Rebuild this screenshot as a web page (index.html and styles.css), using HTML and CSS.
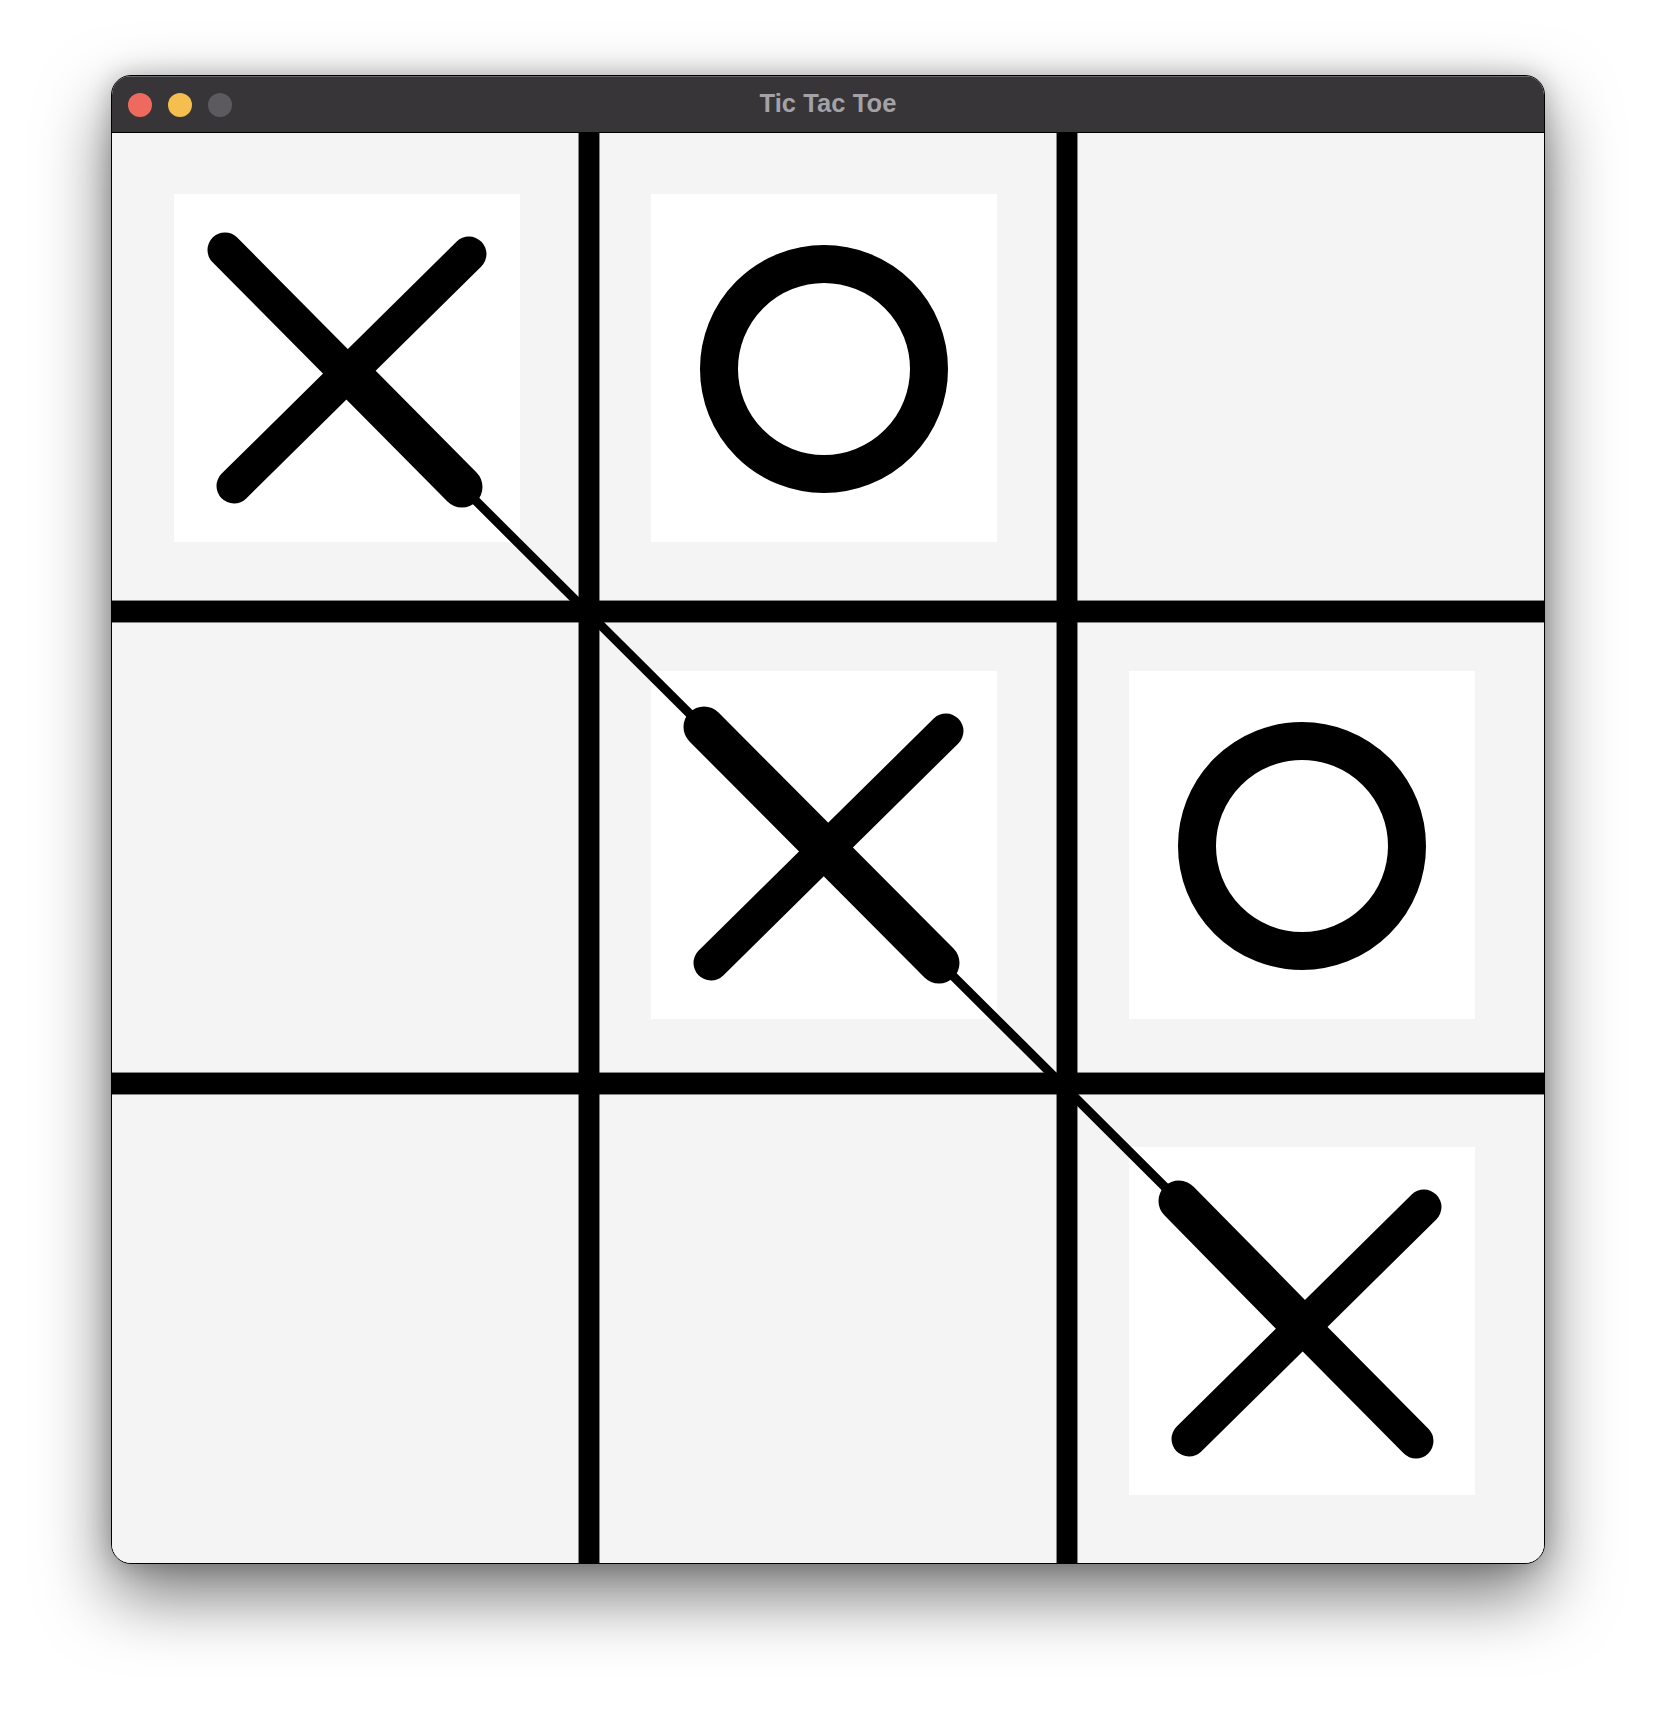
FILE: index.html
```html
<!DOCTYPE html>
<html>
<head>
<meta charset="utf-8">
<title>Tic Tac Toe</title>
<link rel="stylesheet" href="styles.css">
</head>
<body>
<div class="window">
  <div class="titlebar">
    <div class="lights">
      <span class="light red"></span>
      <span class="light yellow"></span>
      <span class="light gray"></span>
    </div>
    <div class="title">Tic Tac Toe</div>
    <div class="spacer"></div>
  </div>
  <div class="board">
    <div class="cell"><div class="tile">
      <svg class="mark" viewBox="0 0 346 348"><line x1="51" y1="56" x2="287" y2="294"/><line x1="295" y1="60" x2="60" y2="292"/></svg>
    </div></div>
    <div class="cell"><div class="tile">
      <svg class="mark" viewBox="0 0 346 348"><circle cx="173" cy="175" r="105" class="ring"/></svg>
    </div></div>
    <div class="cell"></div>
    <div class="cell"></div>
    <div class="cell"><div class="tile">
      <svg class="mark" viewBox="0 0 346 348"><line x1="51" y1="56" x2="287" y2="294"/><line x1="295" y1="60" x2="60" y2="292"/></svg>
    </div></div>
    <div class="cell"><div class="tile">
      <svg class="mark" viewBox="0 0 346 348"><circle cx="173" cy="175" r="105" class="ring"/></svg>
    </div></div>
    <div class="cell"></div>
    <div class="cell"></div>
    <div class="cell"><div class="tile">
      <svg class="mark" viewBox="0 0 346 348"><line x1="51" y1="56" x2="287" y2="294"/><line x1="295" y1="60" x2="60" y2="292"/></svg>
    </div></div>
    <svg class="win" viewBox="0 0 1432 1430">
      <line class="thin" x1="350" y1="354" x2="1067" y2="1068"/>
      <line class="thick" x1="237" y1="240" x2="350" y2="354"/>
      <line class="thick" x1="592" y1="594" x2="827" y2="830"/>
      <line class="thick" x1="1067" y1="1068" x2="1185" y2="1188"/>
    </svg>
  </div>
</div>
</body>
</html>
```

FILE: styles.css
```css
html, body {
  margin: 0;
  padding: 0;
  background: #ffffff;
}

body {
  width: 1656px;
  height: 1712px;
  overflow: hidden;
}

.window {
  margin: 75px 0 0 111px;
  width: 1434px;
  box-sizing: border-box;
  border: 1px solid #000;
  border-radius: 20px;
  overflow: hidden;
  background: #f4f4f4;
  box-shadow: 0 30px 70px rgba(0, 0, 0, 0.55), 0 0 24px rgba(0, 0, 0, 0.22);
}

.titlebar {
  height: 56px;
  background: #373538;
  border-bottom: 1px solid #000;
  box-shadow: inset 0 1px 0 #6b696d;
  display: grid;
  grid-template-columns: 1fr auto 1fr;
  align-items: center;
}

.lights {
  display: flex;
  gap: 16px;
  padding-left: 16px;
  padding-top: 1px;
}

.light {
  width: 24px;
  height: 24px;
  border-radius: 50%;
  display: block;
}

.red { background: #ee6a5f; }
.yellow { background: #f5bf4f; }
.gray { background: #5c5a5e; }

.title {
  font-family: "Liberation Sans", Arial, sans-serif;
  font-weight: bold;
  font-size: 25.5px;
  color: #a4a2a6;
  padding-bottom: 1px;
  letter-spacing: 0.1px;
}

.board {
  position: relative;
  height: 1430px;
  display: grid;
  grid-template-columns: repeat(3, 1fr);
  grid-template-rows: repeat(3, 1fr);
  background-color: #f4f4f4;
  background-image:
    linear-gradient(to right,
      transparent calc(33.333% - 11px), rgba(0,0,0,0.45) calc(33.333% - 11px), rgba(0,0,0,0.45) calc(33.333% - 10px),
      #000 calc(33.333% - 10px), #000 calc(33.333% + 10px),
      rgba(0,0,0,0.45) calc(33.333% + 10px), rgba(0,0,0,0.45) calc(33.333% + 11px), transparent calc(33.333% + 11px),
      transparent calc(66.667% - 11px), rgba(0,0,0,0.45) calc(66.667% - 11px), rgba(0,0,0,0.45) calc(66.667% - 10px),
      #000 calc(66.667% - 10px), #000 calc(66.667% + 10px),
      rgba(0,0,0,0.45) calc(66.667% + 10px), rgba(0,0,0,0.45) calc(66.667% + 11px), transparent calc(66.667% + 11px)),
    linear-gradient(to bottom,
      transparent calc(33.333% - 10px), rgba(0,0,0,0.45) calc(33.333% - 10px), rgba(0,0,0,0.45) calc(33.333% - 9px),
      #000 calc(33.333% - 9px), #000 calc(33.333% + 12px),
      rgba(0,0,0,0.45) calc(33.333% + 12px), rgba(0,0,0,0.45) calc(33.333% + 13px), transparent calc(33.333% + 13px),
      transparent calc(66.667% - 14px), rgba(0,0,0,0.45) calc(66.667% - 14px), rgba(0,0,0,0.45) calc(66.667% - 13px),
      #000 calc(66.667% - 13px), #000 calc(66.667% + 8px),
      rgba(0,0,0,0.45) calc(66.667% + 8px), rgba(0,0,0,0.45) calc(66.667% + 9px), transparent calc(66.667% + 9px));
}

.cell {
  padding: 61px 0 0 62px;
  min-width: 0;
  min-height: 0;
}

.tile {
  width: 346px;
  height: 348px;
  background: #ffffff;
}

.mark {
  display: block;
  width: 346px;
  height: 348px;
}

.mark line {
  stroke: #000;
  stroke-width: 35;
  stroke-linecap: round;
}

.mark .ring {
  fill: none;
  stroke: #000;
  stroke-width: 38;
}

.win {
  position: absolute;
  left: 0;
  top: 0;
  width: 100%;
  height: 100%;
  pointer-events: none;
}

.win line {
  stroke: #000;
  stroke-linecap: round;
}

.win .thin {
  stroke-width: 9;
}

.win .thick {
  stroke-width: 41;
}
```
